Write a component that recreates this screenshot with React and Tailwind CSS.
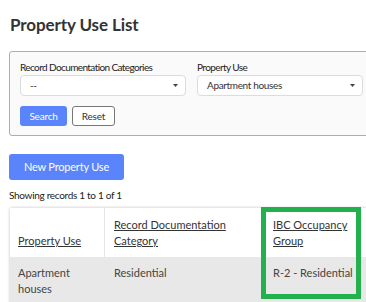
function Caret() {
  return (
    <svg width="5" height="3" viewBox="0 0 5 3" className="shrink-0">
      <path d="M0 0 L5 0 L2.5 3 Z" fill="#444" />
    </svg>
  );
}

function FakeSelect({ label, value }) {
  return (
    <div className="flex flex-col">
      <label className="text-[10px] leading-[14px] tracking-[-0.6px] text-[#222]">{label}</label>
      <div className="mt-[1px] flex h-[21px] items-center justify-between rounded-[4px] border border-[#dcdcdc] bg-white pl-[9px] pr-[7px]">
        <span className="text-[10px] tracking-[-0.35px] text-[#333]">{value}</span>
        <Caret />
      </div>
    </div>
  );
}

export default function App() {
  return (
    <div className="relative h-[302px] w-[366px] overflow-hidden bg-white font-['Lato',sans-serif] text-[#333]">
      <h1 className="pl-[10px] pt-[15px] text-[17px] font-bold leading-[20px] tracking-[-0.1px] text-[#333]">Property Use List</h1>

      {/* filter panel */}
      <div className="ml-[9px] mt-[16px] w-[400px] rounded-[3px] border border-[#92c192] bg-[#fafafa] pb-[9px] pl-[10px] pt-[8px]">
        <div className="grid grid-cols-[166px_166px] gap-x-[11px]">
          <FakeSelect label="Record Documentation Categories" value="--" />
          <FakeSelect label="Property Use" value="Apartment houses" />
        </div>
        <div className="mt-[10px] flex gap-[5px]">
          <button className="h-[20px] w-[47px] rounded-[3px] bg-[#5a84fb] text-[10px] tracking-[-0.2px] text-white">Search</button>
          <button className="h-[20px] w-[43px] rounded-[3px] border border-[#777] bg-white text-[10px] tracking-[-0.2px] text-[#333]">Reset</button>
        </div>
      </div>

      <button className="ml-[9px] mt-[18px] h-[26px] w-[115px] rounded-[3px] bg-[#5a84fb] text-[11px] tracking-[-0.2px] text-white">
        New Property Use
      </button>
      <p className="ml-[9px] mt-[8px] text-[10px] leading-[14px] tracking-[-0.3px] text-[#222]">Showing records 1 to 1 of 1</p>

      {/* table */}
      <div className="ml-[10px] mt-[6px] w-[380px] bg-white shadow-[0_0_3px_rgba(0,0,0,0.25)]">
        <div className="grid grid-cols-[95px_159px_1fr] text-[11px] leading-[16px]">
          <div className="flex items-end border-r border-[#e6e6e6] px-[8px] pb-[8px] pt-[9px]">
            <span className="underline">Property Use</span>
          </div>
          <div className="flex items-end border-r border-[#e6e6e6] px-[9px] pb-[8px] pt-[9px]">
            <span className="underline">Record Documentation Category</span>
          </div>
          <div className="flex items-end px-[9px] pb-[8px] pt-[9px]">
            <span className="w-[82px] underline">IBC Occupancy Group</span>
          </div>
          <div className="bg-[#e8e8e8] px-[8px] pb-[8px] pt-[8px] text-[#444]">
            <span className="block w-[60px]">Apartment houses</span>
          </div>
          <div className="bg-[#e8e8e8] px-[9px] pb-[8px] pt-[8px] text-[#444]">Residential</div>
          <div className="bg-[#e8e8e8] px-[9px] pb-[8px] pt-[8px] text-[#444]">R-2 - Residential</div>
        </div>
      </div>

      {/* highlight annotation */}
      <div className="absolute left-[261px] top-[207px] h-[92px] w-[100px] border-[5px] border-[#22b14c]" />
    </div>
  );
}
